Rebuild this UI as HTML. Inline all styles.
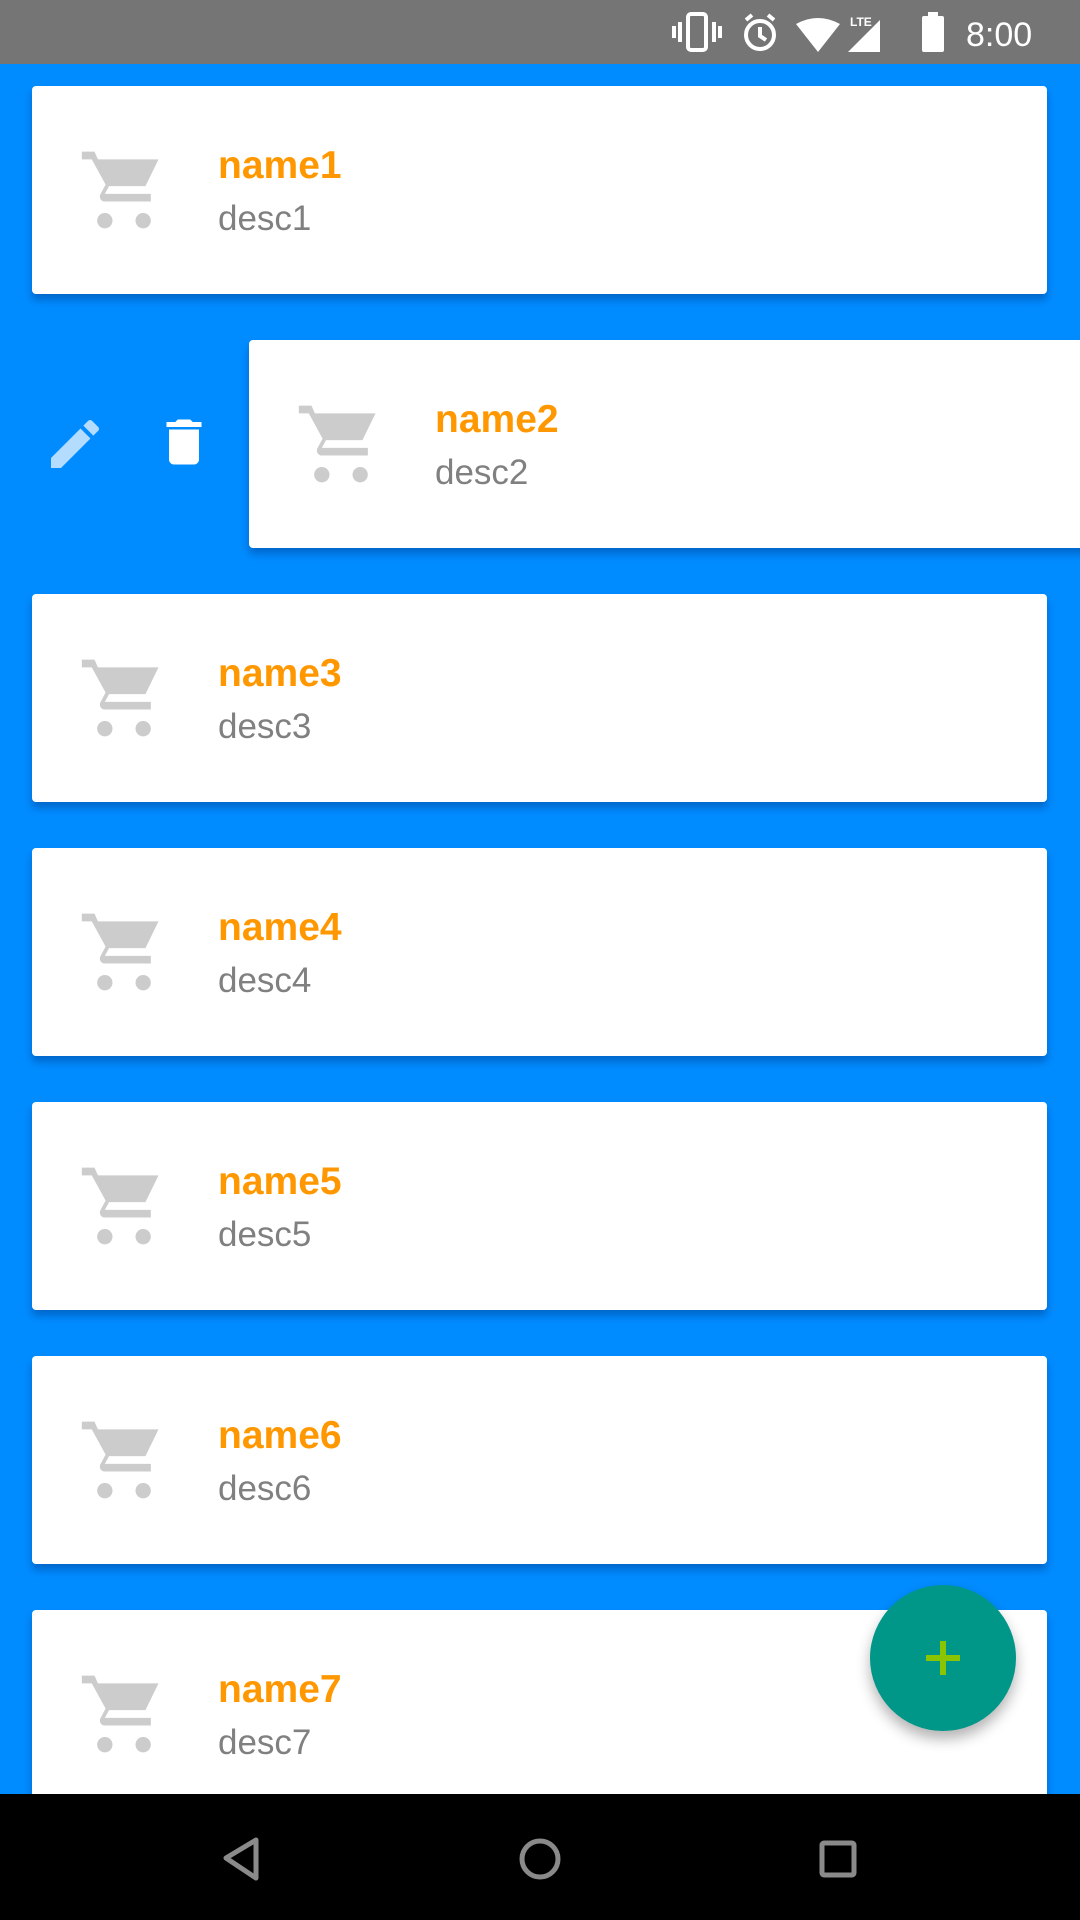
<!DOCTYPE html>
<html><head><meta charset="utf-8"><style>
*{margin:0;padding:0;box-sizing:border-box}
body{width:1080px;height:1920px;position:relative;overflow:hidden;background:#008cff;font-family:"Liberation Sans",sans-serif}
.sb{position:absolute;left:0;top:0;width:1080px;height:64px;background:#757575}
.card{position:absolute;left:32px;width:1015px;height:208px;background:#fff;border-radius:4px;box-shadow:0 6px 8px rgba(0,60,140,.45)}
.cart{position:absolute;left:46px;top:58px;width:92px;height:92px}
.n{position:absolute;left:186px;top:58px;font-size:39px;font-weight:bold;color:#ff9800}
.d{position:absolute;left:186px;top:113px;font-size:35px;color:#808080}
.nav{position:absolute;left:0;top:1794px;width:1080px;height:126px;background:#000}
</style></head><body>
<div class="sb">
<svg style="position:absolute;left:672px;top:10px" width="380" height="46" viewBox="0 0 380 46">
<g fill="none" stroke="#fff" stroke-width="4"><rect x="16" y="4" width="18" height="36" rx="3"/><line x1="8" y1="12" x2="8" y2="32"/><line x1="42" y1="12" x2="42" y2="32"/><line x1="2" y1="16" x2="2" y2="28"/><line x1="48" y1="16" x2="48" y2="28"/>
<circle cx="88" cy="25" r="14"/><path d="M88 17v9l6 4M74 10l6-5M102 10l-6-5"/></g>
<path d="M124 14 Q146 2 168 14 L146 42Z" fill="#fff"/>
<text x="178" y="16" fill="#fff" font-size="12" font-weight="bold">LTE</text>
<path d="M176 42 L208 10 L208 42Z" fill="#fff"/>
<rect x="250" y="6" width="22" height="36" rx="2" fill="#fff"/><rect x="256" y="2" width="10" height="6" fill="#fff"/>
<text x="294" y="36" fill="#fff" font-size="34">8:00</text>
</svg>
</div>

<svg width="0" height="0" style="position:absolute"><defs><symbol id="c" viewBox="0 0 24 24"><path d="M1 2h3.3l.9 2H21l-3.4 7H8.1l-1.1 2H19v2H7c-1.1 0-1.6-1.2-1.1-2l1.3-2.4L3.6 4H1z" fill="#ccc"/><circle cx="7" cy="20" r="2" fill="#ccc"/><circle cx="17" cy="20" r="2" fill="#ccc"/></symbol></defs></svg>

<div class="card" style="top:86px"><svg class="cart"><use href="#c"/></svg><div class="n">name1</div><div class="d">desc1</div></div>
<svg style="position:absolute;left:42px;top:412px" width="66" height="64" viewBox="0 0 24 24"><path d="M3 17.25V21h3.75L17.81 9.94l-3.75-3.75L3 17.25zM20.71 7.04a1 1 0 000-1.41l-2.34-2.34a1 1 0 00-1.41 0l-1.83 1.83 3.75 3.75 1.83-1.83z" fill="#b3dcff"/></svg>
<svg style="position:absolute;left:154px;top:410px" width="60" height="64" viewBox="0 0 24 24"><path d="M6 19c0 1.1.9 2 2 2h8c1.1 0 2-.9 2-2V7H6v12zM19 4h-3.5l-1-1h-5l-1 1H5v2h14V4z" fill="#fff"/></svg>
<div class="card" style="top:340px;left:249px;width:860px"><svg class="cart"><use href="#c"/></svg><div class="n">name2</div><div class="d">desc2</div></div>
<div class="card" style="top:594px"><svg class="cart"><use href="#c"/></svg><div class="n">name3</div><div class="d">desc3</div></div>
<div class="card" style="top:848px"><svg class="cart"><use href="#c"/></svg><div class="n">name4</div><div class="d">desc4</div></div>
<div class="card" style="top:1102px"><svg class="cart"><use href="#c"/></svg><div class="n">name5</div><div class="d">desc5</div></div>
<div class="card" style="top:1356px"><svg class="cart"><use href="#c"/></svg><div class="n">name6</div><div class="d">desc6</div></div>
<div class="card" style="top:1610px"><svg class="cart"><use href="#c"/></svg><div class="n">name7</div><div class="d">desc7</div></div>

<div style="position:absolute;left:870px;top:1585px;width:146px;height:146px;border-radius:50%;background:#009688;box-shadow:0 8px 14px rgba(0,0,0,.3)">
<div style="position:absolute;left:56px;top:70px;width:34px;height:6px;background:#8bc400"></div>
<div style="position:absolute;left:70px;top:56px;width:6px;height:34px;background:#8bc400"></div>
</div>

<div class="nav">
<svg style="position:absolute;left:0;top:0" width="1080" height="126" viewBox="0 0 1080 126">
<g fill="none" stroke="#8a8a8a" stroke-width="5" stroke-linejoin="round">
<path d="M256 46 L226 64 L256 84Z"/>
<circle cx="540" cy="65" r="18"/>
<rect x="822" y="49" width="32" height="32" rx="2"/>
</g></svg>
</div>
</body></html>
